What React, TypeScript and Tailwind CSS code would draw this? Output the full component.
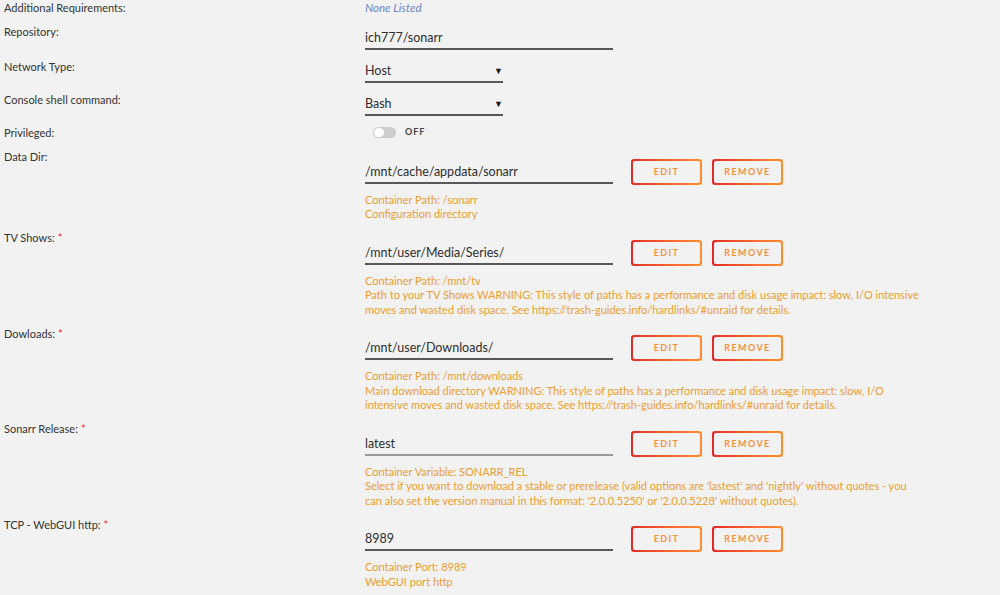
const font = { fontFamily: '"Lato", "Liberation Sans", sans-serif' }

function Label({ text, required }: { text: string; required?: boolean }) {
  return (
    <div className="w-[361px] shrink-0 pl-[4px] text-[11px] leading-[14px] text-[#333]">
      {text}
      {required && <span className="ml-[3px] text-[#f0282d]">*</span>}
    </div>
  )
}

function Underlined({ value, width, arrow, light }: { value: string; width: string; arrow?: boolean; light?: boolean }) {
  return (
    <div
      className={`flex h-[25px] items-end justify-between border-b-2 pb-[3px] text-[12.5px] leading-[15px] text-[#2e2e2e] ${width} ${
        light ? 'border-[#9a9a9a]' : 'border-[#585858]'
      }`}
    >
      <span>{value}</span>
      {arrow && <span className="text-[9px] leading-[15px] text-[#1a1a1a]">▼</span>}
    </div>
  )
}

function GradButton({ label }: { label: string }) {
  return (
    <div className="h-[26px] w-[71px] rounded-[3px] bg-linear-to-r from-[#e22828] to-[#ff8c2f] p-[2px]">
      <div className="flex h-full w-full items-center justify-center rounded-[2px] bg-[#f2f2f2] text-[9px] font-bold tracking-[1.4px] text-[#f7913d]">
        {label}
      </div>
    </div>
  )
}

type PathRow = {
  label: string
  required?: boolean
  value: string
  light?: boolean
  notes: string[]
}

const rows: PathRow[] = [
  {
    label: 'Data Dir:',
    value: '/mnt/cache/appdata/sonarr',
    notes: ['Container Path: /sonarr', 'Configuration directory'],
  },
  {
    label: 'TV Shows:',
    required: true,
    value: '/mnt/user/Media/Series/',
    notes: [
      'Container Path: /mnt/tv',
      'Path to your TV Shows WARNING: This style of paths has a performance and disk usage impact: slow, I/O intensive moves and wasted disk space. See https://trash-guides.info/hardlinks/#unraid for details.',
    ],
  },
  {
    label: 'Dowloads:',
    required: true,
    value: '/mnt/user/Downloads/',
    notes: [
      'Container Path: /mnt/downloads',
      'Main download directory WARNING: This style of paths has a performance and disk usage impact: slow, I/O intensive moves and wasted disk space. See https://trash-guides.info/hardlinks/#unraid for details.',
    ],
  },
  {
    label: 'Sonarr Release:',
    required: true,
    value: 'latest',
    light: true,
    notes: [
      'Container Variable: SONARR_REL',
      "Select if you want to download a stable or prerelease (valid options are 'lastest' and 'nightly' without quotes - you can also set the version manual in this format: '2.0.0.5250' or '2.0.0.5228' without quotes).",
    ],
  },
  {
    label: 'TCP - WebGUI http:',
    required: true,
    value: '8989',
    notes: ['Container Port: 8989', 'WebGUI port http'],
  },
]

export default function App() {
  return (
    <div className="h-[595px] w-[1000px] overflow-hidden bg-[#f2f2f2]" style={font}>
      {/* simple settings */}
      <div className="flex h-[25px] pt-[1px]">
        <Label text="Additional Requirements:" />
        <div className="pl-[4px] text-[11.5px] italic leading-[14px] text-[#6b84c4]">None Listed</div>
      </div>
      <div className="flex h-[35px]">
        <Label text="Repository:" />
        <div className="pl-[4px]">
          <Underlined value="ich777/sonarr" width="w-[248px]" />
        </div>
      </div>
      <div className="flex h-[33px]">
        <Label text="Network Type:" />
        <div className="-mt-[2px] pl-[4px]">
          <Underlined value="Host" width="w-[138px]" arrow />
        </div>
      </div>
      <div className="flex h-[33px]">
        <Label text="Console shell command:" />
        <div className="-mt-[2px] pl-[4px]">
          <Underlined value="Bash" width="w-[138px]" arrow />
        </div>
      </div>
      <div className="flex h-[24px]">
        <Label text="Privileged:" />
        <div className="-mt-[1px] flex h-[14px] items-center gap-[9px] pl-[12px]">
          <div className="flex h-[11px] w-[23px] items-center rounded-full bg-[#cdcdcd] px-[1px]">
            <div className="h-[9px] w-[10px] rounded-full bg-white" />
          </div>
          <span className="text-[9px] font-bold tracking-[1px] text-[#444]">OFF</span>
        </div>
      </div>

      {/* path / port mappings */}
      {rows.map((r) => (
        <div key={r.label} className="flex pb-[9.5px]">
          <Label text={r.label} required={r.required} />
          <div className="pl-[4px] pt-[8.5px]">
            <div className="flex items-start">
              <Underlined value={r.value} width="w-[248px]" light={r.light} />
              <div className="ml-[18px] flex gap-[10px]">
                <GradButton label="EDIT" />
                <GradButton label="REMOVE" />
              </div>
            </div>
            <div className="mt-[8px] w-[560px] text-[11px] leading-[14.5px] text-[#ee9d2e]">
              {r.notes.map((n) => (
                <div key={n}>{n}</div>
              ))}
            </div>
          </div>
        </div>
      ))}
    </div>
  )
}
